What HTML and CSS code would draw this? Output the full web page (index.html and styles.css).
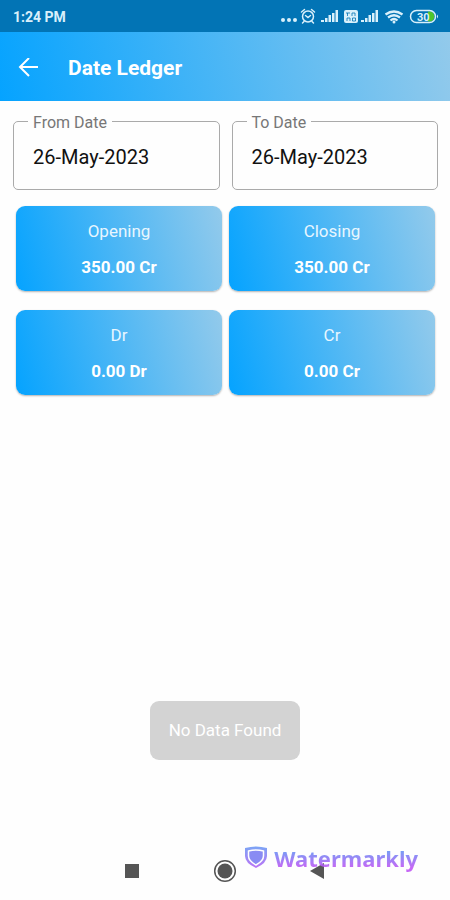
FILE: index.html
```
<!DOCTYPE html>
<html lang="en">
<head>
    <meta charset="UTF-8">
    <meta name="viewport" content="width=device-width, initial-scale=1.0">
    <title>Date Ledger</title>
    <link rel="stylesheet" href="styles.css">
</head>
<body>

    <!-- Status bar -->
    <div class="status-bar">
        <span>1:24 PM</span>
        <svg class="status-icons" width="160" height="18" viewBox="0 0 160 18" fill="#d9f0fb">
            <!-- dots -->
            <circle cx="3" cy="12" r="2"/>
            <circle cx="9" cy="12" r="2"/>
            <circle cx="15" cy="12" r="2"/>
            <!-- alarm -->
            <g fill="none" stroke="#d9f0fb" stroke-width="1.5" stroke-linecap="round">
                <circle cx="28" cy="8.5" r="5.5"/>
                <path d="M21.5 4l3-2.5M34.5 4l-3-2.5M25.5 7.5l2.5 2 2.5-2M24 13.5l-1.5 1.5M32 13.5l1.5 1.5"/>
            </g>
            <!-- signal 1 -->
            <path d="M41 12h3v2h-3zM45 10h2.5v4H45zM48.5 7H51v7h-2.5zM52 5h2.5v9H52zM55.5 2H58v12h-2.500z"/>
            <!-- volte -->
            <rect x="64" y="2" width="14" height="13" rx="2"/>
            <path d="M66 5h4M67.5 5v3M72 8V5h3v3M67 13v-3h3v3M72.500 10v3h3v-3z" fill="none" stroke="#0274b5" stroke-width="0.8"/>
            <!-- signal 2 -->
            <path d="M81 12h3v2h-3zM85 10h2.5v4H85zM88.5 7H91v7h-2.5zM92 5h2.5v9H92zM95.5 2H98v12h-2.5z"/>
            <!-- wifi -->
            <g fill="none" stroke="#d9f0fb" stroke-width="2.3">
                <path d="M105.500 6.5q8.500-6 17 0M108 9.500q6-4.500 12 0M110.500 12.500q3.500-3 7 0"/>
            </g>
            <circle cx="114" cy="14" r="1.5"/>
            <!-- battery -->
            <path d="M148 3.5h3a5.5 5.5 0 0 1 0 10h-3z" fill="#4fc52c"/>
            <rect x="130.5" y="2.5" width="25" height="12" rx="6" fill="none" stroke="#d9f0fb" stroke-width="1.5"/>
            <path d="M157 6.5q2 2 0 4z"/>
            <text class="battery-text" x="137" y="12.5">30</text>
        </svg>
    </div>

    <!-- Header -->
    <header class="app-bar">
        <button type="button" class="back" aria-label="Back">
            <svg width="22" height="20" viewBox="0 0 22 20" fill="none" stroke="#fff" stroke-width="2">
                <path d="M21 9H3M12 0L3 9l9 9"/>
            </svg>
        </button>
        <h1>Date Ledger</h1>
    </header>

    <main>
        <form class="dates">
            <div class="field">
                <label for="from-date">From Date</label>
                <input type="text" id="from-date" value="26-May-2023">
            </div>
            <div class="field">
                <label for="to-date">To Date</label>
                <input type="text" id="to-date" value="26-May-2023">
            </div>
        </form>

        <section class="cards">
            <div class="card">
                <span>Opening</span>
                <strong>350.00 Cr</strong>
            </div>
            <div class="card">
                <span>Closing</span>
                <strong>350.00 Cr</strong>
            </div>
            <div class="card">
                <span>Dr</span>
                <strong>0.00 Dr</strong>
            </div>
            <div class="card">
                <span>Cr</span>
                <strong>0.00 Cr</strong>
            </div>
        </section>

        <p class="empty">No Data Found</p>
    </main>

    <!-- Android navigation -->
    <nav class="nav-bar">
        <button type="button" aria-label="Recent apps">
            <svg width="24" height="24" viewBox="0 0 24 24"><path d="M5 5h14v14H5z" fill="#555"/></svg>
        </button>
        <button type="button" aria-label="Home">
            <svg width="24" height="24" viewBox="0 0 24 24">
                <circle cx="12" cy="12" r="10.3" fill="none" stroke="#555" stroke-width="1.5"/>
                <circle cx="12" cy="12" r="7.5" fill="#555"/>
            </svg>
        </button>
        <button type="button" aria-label="Back">
            <svg width="24" height="24" viewBox="0 0 24 24"><path d="M4 12l14-8v16z" fill="#555"/></svg>
        </button>
        <div class="watermark">
            <svg width="22" height="24" viewBox="0 0 22 24">
                <defs>
                    <linearGradient id="shield" x1="0" y1="0" x2="0" y2="1">
                        <stop offset="0" stop-color="#6e9cf5"/>
                        <stop offset="1" stop-color="#b565f5"/>
                    </linearGradient>
                </defs>
                <path d="M0 2Q11-1 22 2v8q0 7-11 12Q0 17 0 10z" fill="url(#shield)"/>
                <path d="M3.5 5q7.5-2 15 0v5q0 5-7.5 9Q3.5 15 3.5 10z" fill="#7d7ff2" stroke="#fff" stroke-width="1.5"/>
            </svg>
            <span>Watermarkly</span>
        </div>
    </nav>

</body>
</html>
```
FILE: styles.css
```
* {
    box-sizing: border-box;
}

body {
    display: flex;
    flex-direction: column;
    min-height: 100vh;
    margin: 0;
    background-color: #fefefe;
    color: #111;
    font-family: Roboto, sans-serif;
}

button {
    display: flex;
    padding: 0;
    border: none;
    background: none;
    cursor: pointer;
}

.status-bar {
    display: flex;
    align-items: center;
    justify-content: space-between;
    height: 32px;
    padding: 1px 10px 0 13px;
    background-color: #0274b5;
    color: #d9f0fb;
    font-size: 14px;
    font-weight: 700;
}

.battery-text {
    font-size: 11px;
    font-weight: 700;
}

.app-bar {
    display: flex;
    align-items: center;
    gap: 29px;
    height: 69px;
    padding: 2px 17px 0;
    background: linear-gradient(75deg, #05a3ff, #93caeb);
    color: #fff;
}

.app-bar h1 {
    margin: 0;
    font-size: 21px;
    font-weight: 700;
}

main {
    display: flex;
    flex: 1;
    flex-direction: column;
}

.dates {
    display: flex;
    gap: 12px;
    padding: 20px 12px 16px 13px;
}

.field {
    position: relative;
    flex: 1;
}

/* label sits on the top border */
.field label {
    position: absolute;
    top: -8px;
    left: 15px;
    padding: 0 5px;
    background-color: #fefefe;
    color: #777;
    font-size: 16px;
    line-height: 20px;
}

.field input {
    width: 100%;
    height: 69px;
    padding: 2px 19px 0;
    border: 1px solid #aaa;
    border-radius: 5px;
    background: none;
    color: #111;
    font-family: inherit;
    font-size: 20px;
}

.cards {
    display: grid;
    grid-template-columns: 1fr 1fr;
    gap: 19px 7px;
    padding: 0 15px 0 16px;
}

.card {
    display: flex;
    flex-direction: column;
    align-items: center;
    gap: 12px;
    padding: 13px 0 12px;
    border-radius: 9px;
    background: linear-gradient(75deg, #05a3ff, #93caeb);
    box-shadow: 0 1px 2px rgba(0, 0, 0, 0.3);
    color: #fff;
    font-size: 17px;
    line-height: 24px;
}

.card span {
    color: #e8f6ff;
}

.empty {
    margin: auto auto 82px;
    padding: 18px 19px;
    border-radius: 9px;
    background-color: #d3d3d3;
    color: #fff;
    font-size: 17px;
    line-height: 23px;
}

.nav-bar {
    position: relative;
    display: flex;
    align-items: center;
    justify-content: center;
    gap: 69px;
    height: 58px;
}

.watermark {
    position: absolute;
    right: 32px;
    bottom: 26px;
    display: flex;
    align-items: center;
    gap: 7px;
    font-family: "Noto Sans", sans-serif;
    font-size: 22px;
    font-weight: 700;
    line-height: 32px;
    opacity: 0.9;
    pointer-events: none;
}

.watermark span {
    background: linear-gradient(#5c9df5 20%, #c058f5 80%);
    -webkit-background-clip: text;
    background-clip: text;
    color: transparent;
}
```
